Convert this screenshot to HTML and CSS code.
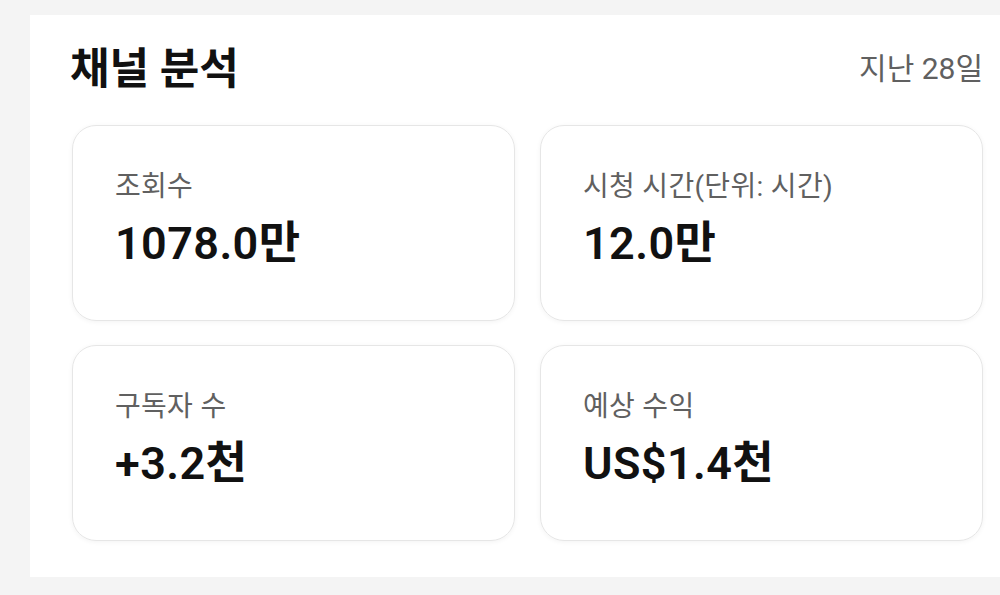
FILE: index.html
```html
<!DOCTYPE html>
<html lang="ko">
  <head>
    <meta charset="UTF-8" />
    <meta name="viewport" content="width=device-width, initial-scale=1.0" />
    <title>채널 분석</title>
    <link rel="stylesheet" href="styles.css">
  </head>
  <body>
    <div class="panel">
      <div class="panelHead">
        <h2>채널 분석</h2>
        <span class="period">지난 28일</span>
      </div>
      <div class="cards">
        <div class="card">
          <p class="label">조회수</p>
          <p class="value">1078.0만</p>
        </div>
        <div class="card">
          <p class="label">시청 시간(단위: 시간)</p>
          <p class="value">12.0만</p>
        </div>
        <div class="card">
          <p class="label">구독자 수</p>
          <p class="value">+3.2천</p>
        </div>
        <div class="card">
          <p class="label">예상 수익</p>
          <p class="value">US$1.4천</p>
        </div>
      </div>
    </div>
  </body>
</html>
```

FILE: styles.css
```css
* {
  margin: 0;
  padding: 0;
  box-sizing: border-box;
  font-family: Roboto, "Noto Sans CJK KR", sans-serif;
}
body {
  background-color: #f4f4f4;
  padding: 15px 0 0 30px;
  overflow: hidden;
}
.panel {
  background-color: #fff;
  height: 562px;
  padding: 28px 17px 0 42px;
}
.panelHead {
  display: flex;
  justify-content: space-between;
  align-items: center;
  height: 52px;
  margin-bottom: 30px;
}
h2 {
  font-size: 43px;
  font-weight: 700;
  line-height: 52px;
  color: #111;
  margin-left: -2px;
}
.period {
  font-size: 30px;
  line-height: 40px;
  color: #606060;
}
.cards {
  display: grid;
  grid-template-columns: 1fr 1fr;
  gap: 24px 25px;
}
.card {
  height: 196px;
  border: 1px solid #e6e6e6;
  border-radius: 24px;
  box-shadow: 0 1px 5px rgba(0, 0, 0, 0.05);
  padding: 42px 0 0 42px;
}
.label {
  font-size: 28px;
  color: #606060;
  line-height: 38px;
  letter-spacing: 0.3px;
}
.value {
  font-size: 45px;
  font-weight: 600;
  color: #111;
  line-height: 50px;
  margin-top: 13px;
  letter-spacing: 0.4px;
}
```
